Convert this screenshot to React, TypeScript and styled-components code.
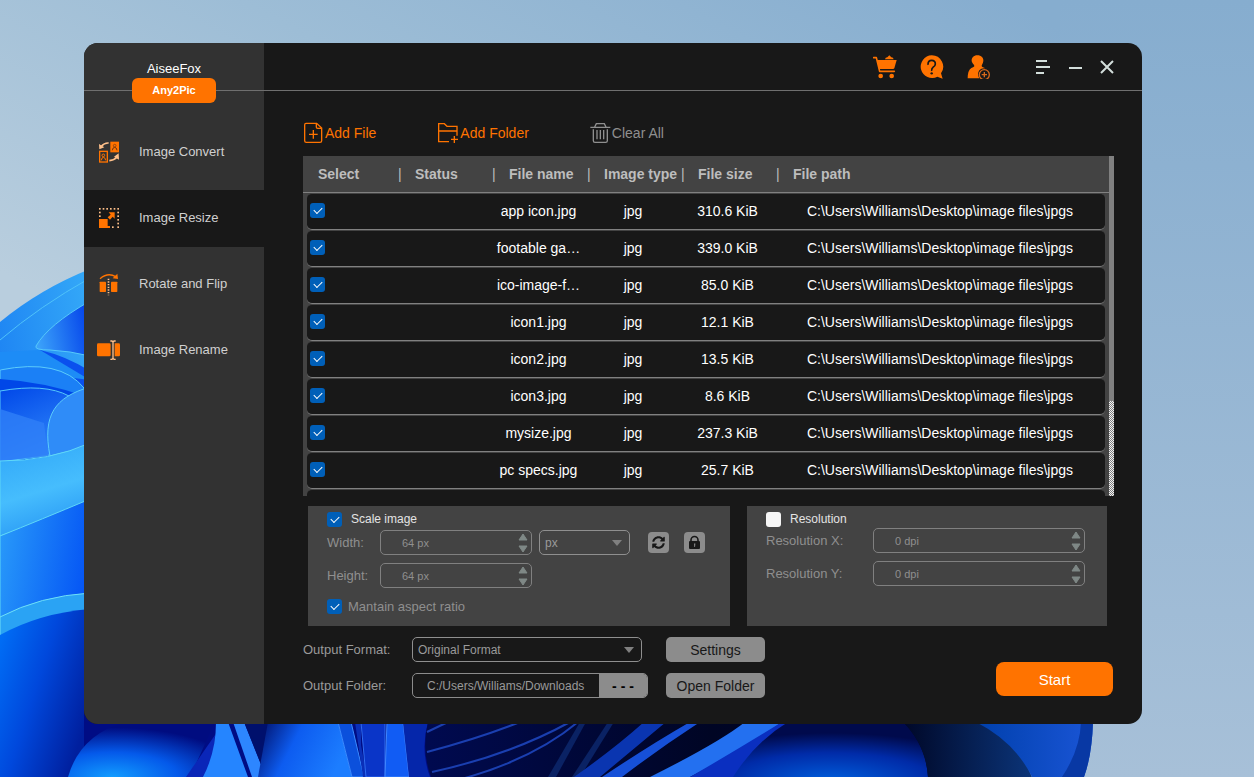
import React, { useState } from "react";
import styled, { createGlobalStyle } from "styled-components";
import { FaSyncAlt } from "react-icons/fa";

const c = {
  base: "#181818",
  side: "#323232",
  panel: "#434343",
  line: "#808080",
  button: "#8c8c8c",
  muted: "#8f8f8f",
  orange: "#ff7300",
  peach: "#ffc08a",
  blue: "#005fb8",
};

const Global = createGlobalStyle`
  *, *::before, *::after { box-sizing: border-box; }
  body { margin: 0; background: #a3bfd7; }
  body, button, input, select { font-family: "Liberation Sans", Arial, sans-serif; }
  button { padding: 0; border: 0; background: none; cursor: pointer; }
`;

const Desktop = styled.div`
  position: relative;
  display: flex;
  min-height: 100vh;
  padding: 43px 112px 53px 84px;
`;

const Wallpaper = styled.svg`
  position: absolute;
  inset: 0;
  width: 100%;
  height: 100%;
`;

const Window = styled.main`
  position: relative;
  flex: 1;
  display: grid;
  grid-template-columns: 180px minmax(0, 1fr);
  border-radius: 14px;
  overflow: hidden;
  background: ${c.base};
`;

const Sidebar = styled.aside`
  background: ${c.side};
`;

const Brand = styled.header`
  position: relative;
  height: 48px;
  padding-top: 17px;
  border-bottom: 1px solid #6f6f6f;
  color: #fff;
  font-size: 13px;
  line-height: 17px;
  text-align: center;
`;

const Badge = styled.span`
  position: absolute;
  left: 48px;
  right: 48px;
  bottom: -13px;
  border-radius: 6px;
  background: ${c.orange};
  font-size: 11px;
  font-weight: bold;
  line-height: 25px;
`;

const Nav = styled.nav`
  display: flex;
  flex-direction: column;
  gap: 9px;
  padding-top: 33px;
`;

const NavItem = styled.a<{ $active?: boolean }>`
  display: flex;
  align-items: center;
  gap: 18px;
  height: 57px;
  padding: 0 0 2px 13px;
  background: ${(p) => (p.$active ? c.base : "transparent")};
  color: #d0d0d0;
  font-size: 13px;
  text-decoration: none;
`;

const Main = styled.section`
  display: flex;
  flex-direction: column;
`;

const TopBar = styled.header`
  display: flex;
  align-items: center;
  justify-content: flex-end;
  gap: 23px;
  height: 48px;
  padding-right: 19px;
  border-bottom: 1px solid #6f6f6f;
`;

const IconButton = styled.button`
  display: flex;
  width: 24px;
  height: 24px;
`;

const WindowControls = styled.div`
  display: flex;
  margin-left: 13px;
`;

const WindowButton = styled.button`
  display: flex;
  align-items: center;
  justify-content: center;
  width: 32px;
  height: 32px;
`;

const Content = styled.div`
  flex: 1;
  display: flex;
  flex-direction: column;
  padding: 31px 28px 26px 39px;
`;

const Toolbar = styled.div`
  display: flex;
  gap: 61px;
  margin-bottom: 12px;
`;

const ToolButton = styled.button<{ $muted?: boolean }>`
  display: flex;
  align-items: center;
  gap: 1px;
  height: 22px;
  color: ${(p) => (p.$muted ? c.muted : c.orange)};
  font-size: 14px;
`;

const FileList = styled.div`
  flex: 1 1 340px;
  display: flex;
  min-height: 0;
`;

const Viewport = styled.div`
  flex: 1;
  height: 0;
  min-height: 100%;
  padding: 0 4px;
  overflow: hidden;
  background: linear-gradient(${c.line}, ${c.line}) 0 36px / 100% 1px no-repeat ${c.panel};
`;

const ScrollTrack = styled.div`
  display: flex;
  align-items: flex-end;
  width: 5px;
  background: ${c.line};
`;

const ScrollThumb = styled.div`
  width: 5px;
  height: 28%;
  background: repeating-conic-gradient(#f4f4f4 0 25%, ${c.line} 0 50%) 0 0 / 2px 2px;
`;

const Table = styled.table`
  width: 100%;
  table-layout: fixed;
  border-collapse: separate;
  border-spacing: 0;
`;

const Column = styled.col<{ $width?: number }>`
  width: ${(p) => (p.$width ? `${p.$width}px` : "auto")};
`;

const HeadCell = styled.th`
  height: 37px;
  padding: 0 0 1px 1px;
  color: #bdbdbd;
  font-size: 14px;
  text-align: left;
  white-space: nowrap;

  &:first-child { padding-left: 11px; }
`;

const Divider = styled.span`
  display: inline-block;
  width: 17px;
  font-weight: normal;
`;

const Cell = styled.td`
  height: 37px;
  padding: 0 4px 2px;
  overflow: hidden;
  border-top: 1px solid ${c.panel};
  border-bottom: 1px solid ${c.line};
  background: ${c.base};
  color: #fff;
  font-size: 14px;
  text-align: center;
  text-overflow: ellipsis;
  white-space: nowrap;

  &:first-child { padding-left: 3px; border-radius: 5px 0 0 5px; }
  &:last-child { border-radius: 0 5px 5px 0; }
`;

const Check = styled.input`
  appearance: none;
  display: block;
  flex: none;
  width: 15px;
  height: 15px;
  margin: 0;
  border-radius: 3px;
  background: #f5f5f5;

  &:checked { background: ${c.blue}; }
  &:checked::after {
    content: "";
    display: block;
    width: 8px;
    height: 5px;
    margin: 4px 0 0 4px;
    border: solid #fff;
    border-width: 0 0 1px 1px;
    transform: rotate(-45deg);
  }
`;

const Panels = styled.div`
  display: grid;
  grid-template-columns: minmax(0, 422fr) minmax(0, 360fr);
  gap: 17px;
  margin: 10px 7px 11px 5px;
`;

const Panel = styled.fieldset`
  min-width: 0;
  height: 120px;
  margin: 0;
  padding: 5px 22px 0 19px;
  border: 0;
  background: ${c.panel};
`;

const CheckRow = styled.label<{ $muted?: boolean }>`
  display: flex;
  align-items: center;
  gap: ${(p) => (p.$muted ? 6 : 9)}px;
  height: 16px;
  margin-top: ${(p) => (p.$muted ? 10 : 0)}px;
  color: ${(p) => (p.$muted ? c.muted : "#e4e4e4")};
  font-size: ${(p) => (p.$muted ? 13 : 12)}px;
`;

const Fields = styled.div<{ $top: number; $label: number }>`
  display: grid;
  grid-template-columns: ${(p) => p.$label}px minmax(0, 1fr);
  row-gap: 8px;
  align-items: center;
  margin-top: ${(p) => p.$top}px;
  color: ${c.muted};
  font-size: 13px;
`;

const FieldLine = styled.div`
  display: flex;
  align-items: center;
`;

const Spinner = styled.div<{ $width?: number }>`
  display: flex;
  width: ${(p) => (p.$width ? `${p.$width}px` : "100%")};
  height: 25px;
  border: 1px solid ${c.line};
  border-radius: 5px;
`;

const SpinInput = styled.input`
  flex: 1;
  min-width: 0;
  padding: 0 0 0 21px;
  border: 0;
  outline: 0;
  background: none;
  color: ${c.muted};
  font-size: 11px;
`;

const SpinButtons = styled.div`
  display: flex;
  flex-direction: column;
  justify-content: space-between;
  width: 13px;
  padding: 2px 0 1px;
`;

const SpinButton = styled.button`
  display: flex;
  width: 10px;
  height: 8px;
`;

const SelectBox = styled.div<{ $width: number }>`
  position: relative;
  width: ${(p) => p.$width}px;
  height: 25px;
  color: ${c.line};

  select {
    appearance: none;
    width: 100%;
    height: 100%;
    padding: 0 24px 0 5px;
    border: 1px solid #8f8f8f;
    border-radius: 5px;
    background: none;
    color: #9a9a9a;
    font-size: 12px;
  }
  svg {
    position: absolute;
    top: 10px;
    right: 8px;
    pointer-events: none;
  }
`;

const SquareButton = styled.button`
  display: flex;
  align-items: center;
  justify-content: center;
  width: 21px;
  height: 21px;
  border-radius: 4px;
  background: ${c.button};
  color: ${c.base};
`;

const SizeTools = styled.div`
  display: flex;
  gap: 15px;
  margin-left: 18px;
`;

const UnitSlot = styled.div`
  margin-left: 7px;
`;

const Footer = styled.footer`
  display: flex;
  justify-content: space-between;
`;

const Output = styled.div`
  display: grid;
  grid-template-columns: 109px 254px 99px;
  row-gap: 11px;
  align-items: center;
  color: #9a9a9a;
  font-size: 13px;
`;

const PathField = styled.div`
  display: flex;
  width: 236px;
  height: 25px;
  border: 1px solid ${c.button};
  border-radius: 5px;
  overflow: hidden;
`;

const PathInput = styled.input`
  flex: 1;
  min-width: 0;
  padding: 0 0 0 14px;
  border: 0;
  outline: 0;
  background: none;
  color: #9a9a9a;
  font-size: 12px;
`;

const BrowseButton = styled.button`
  width: 48px;
  background: ${c.button};
  color: #000;
  font-size: 14px;
  font-weight: bold;
`;

const GrayButton = styled.button`
  height: 25px;
  border-radius: 5px;
  background: ${c.button};
  color: ${c.base};
  font-size: 14px;
`;

const StartButton = styled.button`
  width: 117px;
  height: 34px;
  margin: 25px 1px 0 0;
  border-radius: 8px;
  background: ${c.orange};
  color: #fff;
  font-size: 15px;
`;

const Backdrop = () => (
  <Wallpaper viewBox="0 0 1254 777" preserveAspectRatio="none" aria-hidden="true">
    <defs>
      <linearGradient id="sky" x1="0.8" y1="0" x2="0.3" y2="0.6">
        <stop offset="0" stopColor="#86adcf" />
        <stop offset="0.5" stopColor="#9dbdd6" />
        <stop offset="1" stopColor="#b9cede" />
      </linearGradient>
      <linearGradient id="skyRight" x1="0" y1="0" x2="0" y2="1">
        <stop offset="0" stopColor="#86adcf" />
        <stop offset="1" stopColor="#a7c0d8" />
      </linearGradient>
      <linearGradient id="rim" x1="0" y1="1" x2="1" y2="0">
        <stop offset="0" stopColor="#0f6cf0" />
        <stop offset="1" stopColor="#35aaf8" />
      </linearGradient>
      <linearGradient id="leaf" x1="0" y1="0.6" x2="1" y2="0.4">
        <stop offset="0" stopColor="#3ba2fa" />
        <stop offset="1" stopColor="#0443ea" />
      </linearGradient>
      <linearGradient id="fold" x1="0" y1="0" x2="0.4" y2="1">
        <stop offset="0" stopColor="#0047e8" />
        <stop offset="1" stopColor="#2f86fa" />
      </linearGradient>
      <linearGradient id="band" x1="0" y1="0" x2="0.3" y2="1">
        <stop offset="0" stopColor="#2fa6f8" />
        <stop offset="0.6" stopColor="#46bdfd" />
        <stop offset="1" stopColor="#2c9df6" />
      </linearGradient>
      <linearGradient id="slope" x1="0" y1="0" x2="1" y2="0.5">
        <stop offset="0" stopColor="#2a9dfa" />
        <stop offset="1" stopColor="#004cf4" />
      </linearGradient>
      <linearGradient id="deep" x1="0" y1="0" x2="1" y2="0.6">
        <stop offset="0" stopColor="#0074fa" />
        <stop offset="0.5" stopColor="#0048dc" />
        <stop offset="1" stopColor="#001f9e" />
      </linearGradient>
      <radialGradient id="ball" cx="0.3" cy="1" r="0.9">
        <stop offset="0" stopColor="#129cff" />
        <stop offset="0.5" stopColor="#0459ea" />
        <stop offset="1" stopColor="#000c80" />
      </radialGradient>
      <linearGradient id="petal" x1="0" y1="0" x2="1" y2="0.3">
        <stop offset="0" stopColor="#000c62" />
        <stop offset="0.45" stopColor="#0d5cf0" />
        <stop offset="1" stopColor="#1c7dff" />
      </linearGradient>
      <linearGradient id="night" x1="0" y1="0" x2="1" y2="0">
        <stop offset="0" stopColor="#000a50" />
        <stop offset="0.5" stopColor="#000524" />
        <stop offset="1" stopColor="#000433" />
      </linearGradient>
      <radialGradient id="orb" cx="0.5" cy="1.1" r="0.9">
        <stop offset="0" stopColor="#0060de" />
        <stop offset="0.6" stopColor="#002ba8" />
        <stop offset="1" stopColor="#000a4c" />
      </radialGradient>
      <linearGradient id="right" x1="0" y1="0" x2="1" y2="0">
        <stop offset="0" stopColor="#000828" />
        <stop offset="1" stopColor="#0b3478" />
      </linearGradient>
      <linearGradient id="edge" x1="0" y1="0" x2="1" y2="0">
        <stop offset="0" stopColor="#0040ac" />
        <stop offset="1" stopColor="#1a55d6" />
      </linearGradient>
    </defs>
    <rect width="1254" height="777" fill="url(#sky)" />
    <rect x="1060" width="194" height="777" fill="url(#skyRight)" />

    <path d="M0 322Q40 289 90 269V777H0Z" fill="url(#rim)" />
    <path d="M0 340Q40 306 90 278" fill="none" stroke="#4fc3fa" />
    <path d="M90 301Q48 325 36 346Q34 350 50 350Q70 351 90 356Z" fill="url(#leaf)" stroke="#55c8fb" />
    <path d="M40 350Q66 356 90 371V400H0V369Z" fill="#0a50ee" />
    <path d="M0 352L40 350L90 380L0 369Z" fill="#1d8cf6" />
    <path d="M0 370Q60 358 84 388V460H0Z" fill="#1b80f6" stroke="#5ccdfb" />
    <path d="M0 379Q45 382 84 396V460H0Z" fill="#0047e8" />
    <path d="M0 391Q45 383 69 396L50 455L0 462Z" fill="url(#fold)" stroke="#55c8fb" />
    <path d="M0 409L44 423L48 456L0 461Z" fill="#2f7ff8" opacity="0.8" />
    <path d="M90 387C55 397 42 415 50 456L90 446Z" fill="#2f8cf8" stroke="#5ccdfb" />
    <path d="M0 461Q50 461 90 443V504L0 536Z" fill="url(#band)" stroke="#5fd8f8" />
    <path d="M0 536Q40 520 90 499V777H0Z" fill="url(#slope)" stroke="#5fd8f8" />
    <path d="M0 617Q40 596 90 593V777H0Z" fill="#2aa3f4" stroke="#6ee0f8" />
    <path d="M0 635Q40 613 90 609V777H0Z" fill="url(#deep)" />

    <rect x="84" y="700" width="350" height="77" fill="#000c84" />
    <path d="M68 777Q80 735 125 722H215L190 777Z" fill="url(#ball)" />
    <path d="M215 735L186 777H212Z" fill="#0a26b8" />
    <path d="M216 722Q216 752 203 777H248L228 722Z" fill="#2585ff" />
    <path d="M233 722H244L266 777H252Z" fill="#2d86ff" />
    <path d="M244 722H300V777H266Z" fill="#00106c" />
    <path d="M268 722H338L352 777H258Z" fill="url(#petal)" />
    <path d="M338 722H351L364 777H352Z" fill="#0b50dc" stroke="#3b8cff" />
    <path d="M355 722H361V745L367 777H363Z" fill="#0a2fb8" />
    <path d="M361 722H385V777H366Z" fill="#0a35c8" stroke="#2f6cf0" />
    <path d="M387 722H403L409 777H385Z" fill="#115cf4" stroke="#3f86ff" />
    <path d="M403 722H428Q420 750 430 777H409Z" fill="#0526aa" />
    <path d="M428 722H1000V777H431Q421 750 428 722Z" fill="url(#night)" />
    <g fill="none" stroke="#1a3fb0" strokeWidth="2">
      <path d="M427 732L448 722" />
      <path d="M427 752Q480 738 520 722" />
      <path d="M432 772Q510 755 570 722" />
      <path d="M450 782Q530 762 578 722" />
    </g>
    <path d="M548 777L580 722H586L556 777Z" fill="#0a2264" />
    <path d="M572 777L608 722H614L580 777Z" fill="#0a2264" />
    <path d="M574 777Q615 748 644 722H666Q630 752 600 777Z" fill="#0a35b0" />
    <path d="M602 777Q650 745 690 722H700Q660 748 622 777Z" fill="#1650d8" />
    <path d="M650 777Q720 742 745 722H782Q750 746 690 777Z" fill="#2370f0" />
    <path d="M690 777Q740 748 782 722H800L735 777Z" fill="#0a2fc0" />
    <path d="M733 777Q755 742 788 722H903Q926 745 928 777Z" fill="url(#orb)" />
    <path d="M903 722H985Q1020 745 1032 777H928Q926 745 903 722Z" fill="url(#right)" />
    <path d="M976 722H1093Q1092 755 1084 777H1032Q1015 742 976 722Z" fill="url(#edge)" />
    <path d="M1081 722H1093Q1092 755 1084 777H1062Q1080 750 1081 722Z" fill="#0838a4" />
  </Wallpaper>
);

const CartIcon = () => (
  <svg width="24" height="24" viewBox="41 42 72 72" fill={c.orange} aria-hidden="true">
    <path d="M43 50H51L61 91H105" fill="none" stroke={c.orange} strokeWidth="5" strokeLinejoin="round" strokeLinecap="round" />
    <path d="M53 57H112L105 82Q104 84 101 84H59Z" />
    <path d="M77 55Q78 49 84 49L90 43L96 49Q102 49 103 55Z" />
    <circle cx="64" cy="105" r="7" />
    <circle cx="97" cy="105" r="7" />
  </svg>
);

const HelpIcon = () => (
  <svg width="24" height="24" viewBox="182 46 72 72" aria-hidden="true">
    <path d="M217 47A34 34 0 1 0 234 111L250 117L245 101A34 34 0 0 0 217 47Z" fill={c.orange} />
    <path d="M206 74Q206 62 217 62Q228 62 228 73Q228 79 221 83Q217 86 217 92" fill="none" stroke={c.base} strokeWidth="5" strokeLinecap="round" />
    <circle cx="217" cy="101" r="3.5" fill={c.base} />
  </svg>
);

const UserIcon = () => (
  <svg width="24" height="24" viewBox="319 42 72 72" aria-hidden="true">
    <path d="M350 43C362 43 369 51 368 60C367 69 363 71 363 75C363 78 370 80 374 82C360 80 350 90 353 104Q354 109 357 112H321Q321 88 332 81C337 78 341 78 341 75C341 71 335 69 333 60C332 51 339 43 350 43Z" fill={c.orange} />
    <circle cx="371" cy="101" r="15" fill="none" stroke="#d8681a" strokeWidth="4" />
    <path d="M371 93V109M363 101H379" stroke="#d8681a" strokeWidth="4" />
  </svg>
);

const ConvertIcon = () => (
  <svg width="24" height="24" viewBox="39 298 72 72" fill="none" aria-hidden="true">
    <rect x="79" y="303" width="26" height="32" fill={c.orange} />
    <circle cx="92" cy="315" r="4" stroke="#6b3410" strokeWidth="2" />
    <path d="M85 329Q86 320 92 320Q98 320 99 329" stroke="#6b3410" strokeWidth="3" />
    <rect x="47" y="332" width="23" height="32" stroke={c.orange} strokeWidth="4" />
    <circle cx="58" cy="344" r="4" stroke={c.orange} strokeWidth="3" />
    <path d="M52 359Q53 350 58 350Q64 350 65 359" stroke={c.orange} strokeWidth="3" />
    <path d="M74 307Q61 306 52 317" stroke={c.peach} strokeWidth="5" />
    <path d="M45 310L46 326L61 320Z" fill={c.peach} />
    <path d="M76 360Q91 359 98 350" stroke={c.peach} strokeWidth="5" />
    <path d="M104 338L90 348L105 357Z" fill={c.peach} />
  </svg>
);

const dots = [45, 56, 67, 78, 89, 100];

const ResizeIcon = () => (
  <svg width="24" height="24" viewBox="39 48 72 72" aria-hidden="true">
    <g fill={c.peach}>
      {dots.map((x) => <rect key={x} x={x} y="54" width="5" height="5" />)}
      {[65, 76].map((y) => <rect key={y} x="45" y={y} width="5" height="5" />)}
      {[65, 76, 87, 98, 109].map((y) => <rect key={y} x="100" y={y} width="5" height="5" />)}
      <rect x="84" y="109" width="5" height="5" />
    </g>
    <path d="M45 87H71V108H78V114H45Z" fill={c.orange} />
    <path d="M74 67H92V86L86 80L78 89L71 82L80 74Z" fill={c.orange} />
  </svg>
);

const FlipIcon = () => (
  <svg width="24" height="24" viewBox="39 247 72 72" fill="none" aria-hidden="true">
    <path d="M48 267Q72 247 95 261" stroke={c.orange} strokeWidth="4" />
    <path d="M100 252L102 268L86 266Z" fill={c.orange} />
    <rect x="47" y="276" width="19" height="31" rx="2" fill={c.orange} />
    <rect x="81" y="276" width="19" height="31" rx="2" fill={c.orange} />
    <path d="M73.500 267V317" stroke={c.peach} strokeWidth="5" strokeDasharray="4 4" />
  </svg>
);

const RenameIcon = () => (
  <svg width="24" height="24" viewBox="39 446 72 72" fill="none" aria-hidden="true">
    <rect x="39" y="462" width="41" height="39" rx="4" fill={c.orange} />
    <path d="M92 462H104Q108 462 108 466V497Q108 501 104 501H92Z" fill={c.orange} />
    <path d="M79 455H84L87 458L90 455H95M87 457V507M79 510H84L87 507L90 510H95" stroke={c.peach} strokeWidth="4" />
  </svg>
);

const AddFileIcon = () => (
  <svg width="21" height="22" viewBox="9 36 63 66" fill="none" stroke="currentColor" strokeWidth="4" aria-hidden="true">
    <path d="M50 40H18Q14 40 14 45V92Q14 97 19 97H60Q65 97 65 92V54ZM49 41V51Q49 55 53 55H64M40 60V86M27 73H53" />
  </svg>
);

const AddFolderIcon = () => (
  <svg width="22" height="22" viewBox="413 36 66 66" fill="none" stroke="currentColor" strokeWidth="4" aria-hidden="true">
    <path d="M449 95H418V41H435L443 49H473V77M418 63H473M465 78V99M455 88H476" />
  </svg>
);

const TrashIcon = () => (
  <svg width="21" height="22" viewBox="877 36 63 66" fill="none" stroke="currentColor" strokeWidth="4" aria-hidden="true">
    <path d="M878 52H938M891 51L896 41H920L925 51M887 58V92Q887 97 892 97H924Q929 97 929 92V58M898 60V88M908 60V88M918 60V88" />
  </svg>
);

const LockIcon = () => (
  <svg width="13" height="15" viewBox="0 0 13 15" aria-hidden="true">
    <path d="M3 7V5A3 3 0 0 1 10 5V7" fill="none" stroke="currentColor" strokeWidth="1.600" />
    <rect x="1" y="6" width="11" height="8" rx="1" fill="currentColor" />
    <path d="M6 8.500H7.400L7 12H6.300Z" fill={c.button} />
  </svg>
);

const Caret = () => (
  <svg width="10" height="6" viewBox="0 0 10 6" fill="currentColor" aria-hidden="true">
    <path d="M0 0H10L5 6Z" />
  </svg>
);

const SpinArrow = ({ down }: { down?: boolean }) => (
  <svg width="10" height="8" viewBox="0 0 10 8" fill="#7f8886" aria-hidden="true">
    <path d={down ? "M1 1H9L5 7Z" : "M1 7H9L5 1Z"} stroke="#7f8886" strokeLinejoin="round" />
  </svg>
);

const navItems = [
  { label: "Image Convert", icon: <ConvertIcon /> },
  { label: "Image Resize", icon: <ResizeIcon />, active: true },
  { label: "Rotate and Flip", icon: <FlipIcon /> },
  { label: "Image Rename", icon: <RenameIcon /> },
];

const headings = ["Select", "Status", "File name", "Image type", "File size", "File path"];
const columnWidths = [90, 94, 95, 94, 95, 0];
const folder = "C:\\Users\\Williams\\Desktop\\image files\\jpgs";
const files = [
  ["app icon.jpg", "310.6 KiB"],
  ["footable ga…", "339.0 KiB"],
  ["ico-image-f…", "85.0 KiB"],
  ["icon1.jpg", "12.1 KiB"],
  ["icon2.jpg", "13.5 KiB"],
  ["icon3.jpg", "8.6 KiB"],
  ["mysize.jpg", "237.3 KiB"],
  ["pc specs.jpg", "25.7 KiB"],
];

function NumberField({ id, value, unit, width }: { id: string; value: number; unit: string; width?: number }) {
  const [n, setN] = useState(value);
  return (
    <Spinner $width={width}>
      <SpinInput id={id} value={`${n} ${unit}`} onChange={(e) => setN(parseInt(e.target.value, 10) || 0)} />
      <SpinButtons>
        <SpinButton type="button" aria-label="Increase" onClick={() => setN(n + 1)}>
          <SpinArrow />
        </SpinButton>
        <SpinButton type="button" aria-label="Decrease" onClick={() => setN(Math.max(0, n - 1))}>
          <SpinArrow down />
        </SpinButton>
      </SpinButtons>
    </Spinner>
  );
}

export default function App() {
  return (
    <>
      <Global />
      <Desktop>
        <Backdrop />
        <Window>
          <Sidebar>
            <Brand>
              AiseeFox
              <Badge>Any2Pic</Badge>
            </Brand>
            <Nav>
              {navItems.map((item) => (
                <NavItem key={item.label} href="#" $active={item.active}>
                  {item.icon}
                  {item.label}
                </NavItem>
              ))}
            </Nav>
          </Sidebar>
          <Main>
            <TopBar>
              <IconButton type="button" aria-label="Shop"><CartIcon /></IconButton>
              <IconButton type="button" aria-label="Help"><HelpIcon /></IconButton>
              <IconButton type="button" aria-label="Register"><UserIcon /></IconButton>
              <WindowControls>
                <WindowButton type="button" aria-label="Menu">
                  <svg width="14" height="14" viewBox="0 0 14 14" fill="none" stroke="#d3dedb" strokeWidth="2">
                    <path d="M0 1H11M0 7H14M0 13H8" />
                  </svg>
                </WindowButton>
                <WindowButton type="button" aria-label="Minimize">
                  <svg width="14" height="14" viewBox="0 0 14 14" fill="none" stroke="#d3dedb" strokeWidth="2">
                    <path d="M1 8H14" />
                  </svg>
                </WindowButton>
                <WindowButton type="button" aria-label="Close">
                  <svg width="14" height="14" viewBox="0 0 14 14" fill="none" stroke="#d3dedb" strokeWidth="2">
                    <path d="M1 1L13 13M13 1L1 13" />
                  </svg>
                </WindowButton>
              </WindowControls>
            </TopBar>
            <Content>
              <Toolbar>
                <ToolButton type="button"><AddFileIcon />Add File</ToolButton>
                <ToolButton type="button"><AddFolderIcon />Add Folder</ToolButton>
                <ToolButton type="button" $muted><TrashIcon />Clear All</ToolButton>
              </Toolbar>
              <FileList>
                <Viewport>
                  <Table>
                    <colgroup>
                      {columnWidths.map((w, i) => <Column key={i} $width={w} />)}
                    </colgroup>
                    <thead>
                      <tr>
                        {headings.map((h, i) => (
                          <HeadCell key={h} scope="col">
                            {i > 0 && <Divider>|</Divider>}
                            {h}
                          </HeadCell>
                        ))}
                      </tr>
                    </thead>
                    <tbody>
                      {files.map(([name, size]) => (
                        <tr key={name}>
                          <Cell><Check type="checkbox" defaultChecked aria-label={`Select ${name}`} /></Cell>
                          <Cell />
                          <Cell>{name}</Cell>
                          <Cell>jpg</Cell>
                          <Cell>{size}</Cell>
                          <Cell>{folder}</Cell>
                        </tr>
                      ))}
                      <tr>
                        {headings.map((h) => <Cell key={h} />)}
                      </tr>
                    </tbody>
                  </Table>
                </Viewport>
                <ScrollTrack><ScrollThumb /></ScrollTrack>
              </FileList>
              <Panels>
                <Panel>
                  <CheckRow><Check type="checkbox" defaultChecked />Scale image</CheckRow>
                  <Fields $top={3} $label={53}>
                    <label htmlFor="width">Width:</label>
                    <FieldLine>
                      <NumberField id="width" value={64} unit="px" width={152} />
                      <UnitSlot>
                        <SelectBox $width={91}>
                          <select aria-label="Unit"><option>px</option><option>%</option></select>
                          <Caret />
                        </SelectBox>
                      </UnitSlot>
                      <SizeTools>
                        <SquareButton type="button" aria-label="Reset size"><FaSyncAlt size={13} /></SquareButton>
                        <SquareButton type="button" aria-label="Lock size"><LockIcon /></SquareButton>
                      </SizeTools>
                    </FieldLine>
                    <label htmlFor="height">Height:</label>
                    <FieldLine><NumberField id="height" value={64} unit="px" width={152} /></FieldLine>
                  </Fields>
                  <CheckRow $muted><Check type="checkbox" defaultChecked />Mantain aspect ratio</CheckRow>
                </Panel>
                <Panel>
                  <CheckRow><Check type="checkbox" />Resolution</CheckRow>
                  <Fields $top={1} $label={107}>
                    <label htmlFor="resx">Resolution X:</label>
                    <FieldLine><NumberField id="resx" value={0} unit="dpi" /></FieldLine>
                    <label htmlFor="resy">Resolution Y:</label>
                    <FieldLine><NumberField id="resy" value={0} unit="dpi" /></FieldLine>
                  </Fields>
                </Panel>
              </Panels>
              <Footer>
                <Output>
                  <label htmlFor="format">Output Format:</label>
                  <FieldLine>
                    <SelectBox $width={230}>
                      <select id="format"><option>Original Format</option><option>jpg</option><option>png</option></select>
                      <Caret />
                    </SelectBox>
                  </FieldLine>
                  <GrayButton type="button">Settings</GrayButton>
                  <label htmlFor="folder">Output Folder:</label>
                  <PathField>
                    <PathInput id="folder" defaultValue="C:/Users/Williams/Downloads" />
                    <BrowseButton type="button" aria-label="Browse">- - -</BrowseButton>
                  </PathField>
                  <GrayButton type="button">Open Folder</GrayButton>
                </Output>
                <StartButton type="button">Start</StartButton>
              </Footer>
            </Content>
          </Main>
        </Window>
      </Desktop>
    </>
  );
}
